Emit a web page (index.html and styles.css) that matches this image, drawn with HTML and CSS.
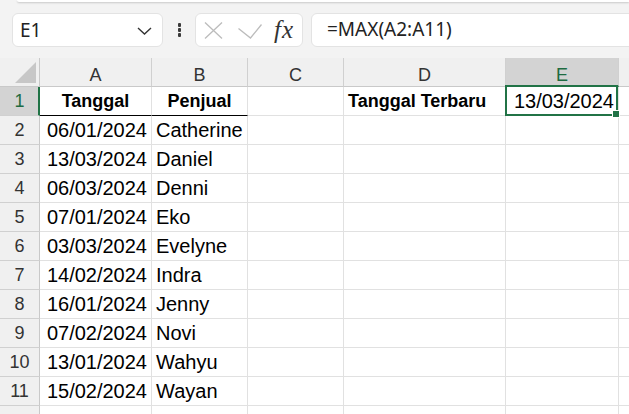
FILE: index.html
```html
<!DOCTYPE html>
<html>
<head>
<meta charset="utf-8">
<link rel="stylesheet" href="styles.css">
</head>
<body>
<div class="toolbar">
  <div class="ribbon-edge"></div>
  <div class="bar">
    <div class="namebox">
      <span class="ref">E1</span>
      <svg class="chev" width="15" height="8" viewBox="0 0 15 8"><polyline points="1,1 7.5,7 14,1" fill="none" stroke="#333" stroke-width="1.4"/></svg>
    </div>
    <div class="dots"><i></i><i></i><i></i></div>
    <div class="fxbox">
      <svg width="19" height="17" viewBox="0 0 19 17"><path d="M1 0.5 L18 16.5 M18 0.5 L1 16.5" stroke="#bcbcbc" stroke-width="1.3" fill="none"/></svg>
      <svg width="24" height="15" viewBox="0 0 24 15"><polyline points="0.5,4.5 12.5,14 23.5,0.5" stroke="#bcbcbc" stroke-width="1.3" fill="none"/></svg>
      <span class="fx">fx</span>
    </div>
    <div class="formula">=MAX(A2:A11)</div>
  </div>
</div>
<div class="grid">
  <div class="corner"><span class="tri"></span></div>
  <div class="ch">A</div><div class="ch">B</div><div class="ch">C</div><div class="ch">D</div><div class="ch sel">E</div><div class="ch last"></div>

  <div class="rh sel">1</div>
  <div class="c b ctr ul">Tanggal</div><div class="c b ctr ul">Penjual</div><div class="c"></div><div class="c b">Tanggal Terbaru</div><div class="c r active">13/03/2024</div><div class="c last"></div>

  <div class="rh">2</div><div class="c r">06/01/2024</div><div class="c">Catherine</div><div class="c"></div><div class="c"></div><div class="c"></div><div class="c last"></div>
  <div class="rh">3</div><div class="c r">13/03/2024</div><div class="c">Daniel</div><div class="c"></div><div class="c"></div><div class="c"></div><div class="c last"></div>
  <div class="rh">4</div><div class="c r">06/03/2024</div><div class="c">Denni</div><div class="c"></div><div class="c"></div><div class="c"></div><div class="c last"></div>
  <div class="rh">5</div><div class="c r">07/01/2024</div><div class="c">Eko</div><div class="c"></div><div class="c"></div><div class="c"></div><div class="c last"></div>
  <div class="rh">6</div><div class="c r">03/03/2024</div><div class="c">Evelyne</div><div class="c"></div><div class="c"></div><div class="c"></div><div class="c last"></div>
  <div class="rh">7</div><div class="c r">14/02/2024</div><div class="c">Indra</div><div class="c"></div><div class="c"></div><div class="c"></div><div class="c last"></div>
  <div class="rh">8</div><div class="c r">16/01/2024</div><div class="c">Jenny</div><div class="c"></div><div class="c"></div><div class="c"></div><div class="c last"></div>
  <div class="rh">9</div><div class="c r">07/02/2024</div><div class="c">Novi</div><div class="c"></div><div class="c"></div><div class="c"></div><div class="c last"></div>
  <div class="rh">10</div><div class="c r">13/01/2024</div><div class="c">Wahyu</div><div class="c"></div><div class="c"></div><div class="c"></div><div class="c last"></div>
  <div class="rh">11</div><div class="c r">15/02/2024</div><div class="c">Wayan</div><div class="c"></div><div class="c"></div><div class="c"></div><div class="c last"></div>
  <div class="rh"></div><div class="c"></div><div class="c"></div><div class="c"></div><div class="c"></div><div class="c"></div><div class="c last"></div>
</div>
</body>
</html>
```
FILE: styles.css
```css
html, body {
  margin: 0;
  padding: 0;
  background: #ffffff;
  overflow: hidden;
}
body {
  width: 629px;
  height: 414px;
  font-family: "Liberation Sans", Arial, sans-serif;
}
.toolbar {
  height: 58px;
  background: #f3f3f3;
  overflow: hidden;
}
.ribbon-edge {
  height: 2px;
  margin-left: 17px;
  background: #ffffff;
  border-bottom-left-radius: 6px;
  box-shadow: 0 1px 2px rgba(0,0,0,0.18);
}
.bar {
  display: flex;
  align-items: center;
  margin-top: 11px;
  padding-left: 12px;
  height: 34px;
}
.namebox {
  width: 151px;
  height: 34px;
  box-sizing: border-box;
  background: #fff;
  border: 1px solid #e3e3e3;
  border-radius: 6px;
  display: flex;
  align-items: center;
  justify-content: space-between;
  padding: 0 10px 0 7px;
  flex: none;
}
.ref {
  font-family: "Noto Sans", sans-serif;
  font-size: 19px;
  color: #222;
}
.chev { margin-top: 2px; }
.dots {
  width: 32px;
  flex: none;
  display: flex;
  flex-direction: column;
  align-items: center;
  gap: 1.5px;
  padding-left: 1px;
  box-sizing: border-box;
}
.dots i {
  width: 3.5px;
  height: 3.5px;
  background: #3a3a3a;
  border-radius: 1px;
  display: block;
}
.fxbox {
  width: 108px;
  height: 34px;
  box-sizing: border-box;
  background: #fff;
  border: 1px solid #e3e3e3;
  border-radius: 6px;
  display: flex;
  align-items: center;
  padding: 0 0 0 8px;
  gap: 14px;
  flex: none;
}
.fxbox svg:first-child { margin-top: 1px; }
.fxbox svg:nth-child(2) { margin-left: 1px; margin-top: 2px; }
.fx {
  font-family: "Liberation Serif", serif;
  font-style: italic;
  font-size: 25px;
  color: #333;
  margin-left: -2px;
  letter-spacing: 1px;
}
.formula {
  margin-left: 8px;
  flex: none;
  width: 340px;
  height: 34px;
  box-sizing: border-box;
  background: #fff;
  border: 1px solid #e3e3e3;
  border-radius: 6px;
  font-family: "Noto Sans", sans-serif;
  font-size: 19px;
  color: #222;
  padding-left: 15px;
  line-height: 31px;
}
.grid {
  display: grid;
  grid-template-columns: 40px 112px 96px 96px 162px 113px 1fr;
  grid-auto-rows: 29px;
  height: 356px;
  overflow: hidden;
}
.grid > div {
  box-sizing: border-box;
  border-right: 1px solid #e1e1e1;
  border-bottom: 1px solid #e1e1e1;
  font-size: 20px;
  line-height: 28px;
  color: #000;
  white-space: nowrap;
  overflow: visible;
}
.grid > .last { border-right: none; }
.corner {
  background: #f0f0f0;
  display: flex;
  align-items: flex-end;
  justify-content: flex-end;
  padding: 0 3px 3px 0;
  border-right-color: #c9c9c9 !important;
  border-bottom-color: #c9c9c9 !important;
}
.tri {
  width: 21px;
  height: 21px;
  background: #c7c7c7;
  clip-path: polygon(100% 0, 100% 100%, 0 100%);
}
.grid > .ch {
  background: #f0f0f0;
  text-align: center;
  font-size: 18px;
  color: #333;
  border-right-color: #d0d0d0;
  border-bottom-color: #c9c9c9;
  line-height: 28px;
  padding-top: 3px;
}
.grid > .ch.last { background: #f0f0f0; }
.grid > .ch.sel {
  background: #d3d3d3;
  color: #1e6b41;
  border-bottom: 2px solid #217346;
}
.grid > .rh {
  background: #f0f0f0;
  text-align: center;
  font-size: 18px;
  color: #333;
  border-right-color: #c9c9c9;
  border-bottom-color: #d0d0d0;
  padding-top: 1px;
  line-height: 27px;
}
.grid > .rh.sel {
  background: #d3d3d3;
  color: #1e6b41;
  border-right: 2px solid #217346;
  padding-left: 1px;
}
.c { padding: 0 4px; }
.grid > .b { font-weight: bold; font-size: 18px; }
.grid > .ctr { text-align: center; }
.grid > .r { text-align: right; padding-right: 4px; }
.grid > .ul { border-bottom: 1px solid #000; }
.active { position: relative; }
.active::after {
  content: "";
  position: absolute;
  left: -1px;
  top: -2px;
  right: 0;
  bottom: -1px;
  border: 2px solid #217346;
}
.active::before {
  content: "";
  position: absolute;
  right: -2px;
  bottom: -3px;
  width: 6px;
  height: 6px;
  background: #217346;
  border: 1px solid #fff;
  z-index: 2;
}
```
